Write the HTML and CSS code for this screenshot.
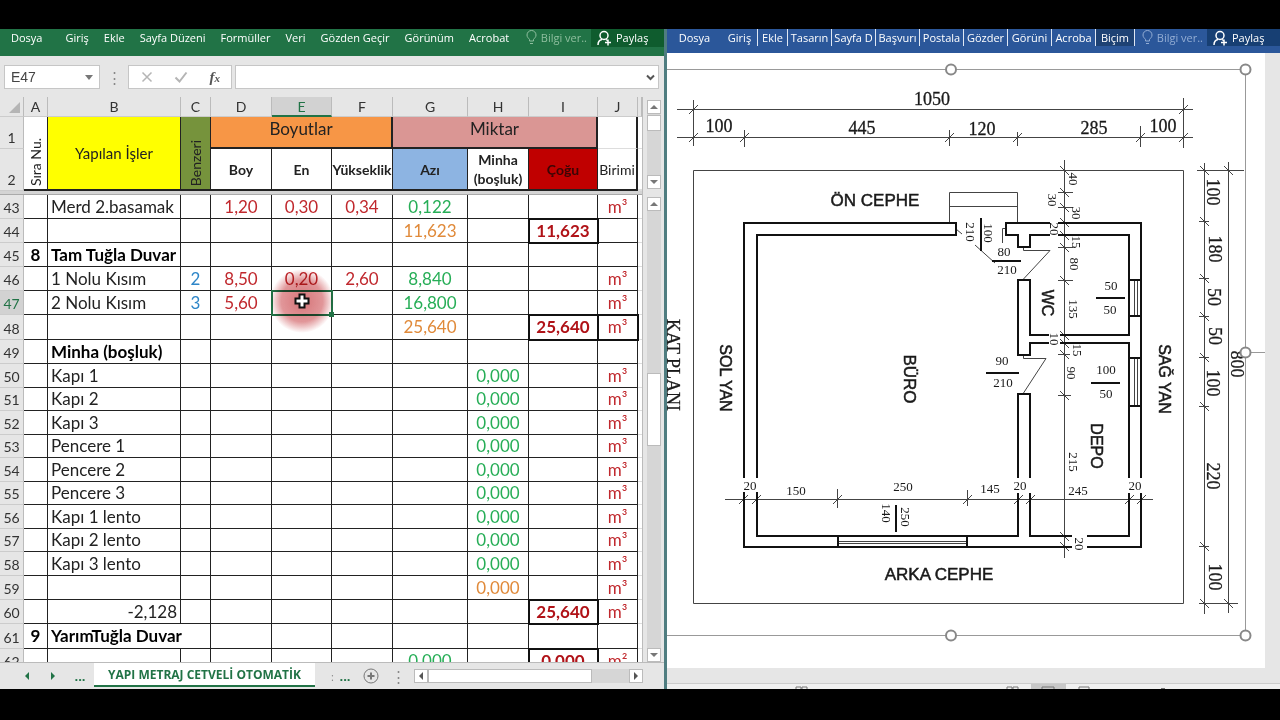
FILE: index.html
```html
<!DOCTYPE html>
<html lang="tr">
<head>
<meta charset="utf-8">
<title>Yapı Metraj Cetveli</title>
<link rel="stylesheet" href="styles.css">
</head>
<body>
<main class="desktop">
<section class="excel">
  <nav class="ribbon excel-ribbon">
    <button class="file">Dosya</button><button>Giriş</button><button>Ekle</button><button>Sayfa Düzeni</button><button>Formüller</button><button>Veri</button><button>Gözden Geçir</button><button>Görünüm</button><button>Acrobat</button>
    <button class="tell"><svg width="11" height="16" viewBox="0 0 11 16"><path d="M3.500 11V9.500C2.500 8 1 7.300 1 5a4.500 4.500 0 0 1 9 0c0 2.300-1.500 3-2.500 4.500V11zM4 13.500h3"/></svg>Bilgi ver..</button>
    <button class="share"><svg width="15" height="16" viewBox="0 0 15 16"><circle cx="7" cy="5.500" r="4"/><path d="M1 15c0-3 1.500-5 4-5.500M9 9.500l1.500 1M11 9.500v6M8 12.500h6"/></svg>Paylaş</button>
  </nav>
  <div class="formula-bar">
    <button class="name-box"><span>E47</span><i class="caret"></i></button>
    <span class="grip">⋮</span>
    <div class="fx">
      <button aria-label="İptal"><svg width="12" height="12" viewBox="0 0 12 12"><path d="M1.500 1.500l9 9M10.500 1.500l-9 9"/></svg></button>
      <button aria-label="Gir"><svg width="14" height="12" viewBox="0 0 14 12"><path class="check" d="M1.500 6.500l4 4L12.500 1.500"/></svg></button>
      <button class="fn" aria-label="İşlev ekle">f<small>x</small></button>
    </div>
    <label class="formula"><input type="text" aria-label="Formül"><svg width="9" height="7" viewBox="0 0 9 7"><path d="M1 1.500l3.500 3.500L8 1.500"/></svg></label>
  </div>
  <div class="sheet-area">
    <div class="sheet">
      <table>
        <colgroup><col class="w-head"><col class="w-a"><col class="w-b"><col class="w-c"><col class="w-d"><col class="w-e"><col class="w-f"><col class="w-g"><col class="w-h"><col class="w-i"><col class="w-j"><col></colgroup>
        <thead>
          <tr class="letters"><th class="corner"><i></i></th><th>A</th><th>B</th><th>C</th><th>D</th><th class="current">E</th><th>F</th><th>G</th><th>H</th><th>I</th><th>J</th><th></th></tr>
          <tr class="row-one"><th class="num">1</th><td rowspan="2" class="side thick-b"><span>Sıra Nu.</span></td><td rowspan="2" class="yellow thick-b">Yapılan İşler</td><td rowspan="2" class="side olive thick-b"><span>Benzeri</span></td><td colspan="3" class="group orange thick-b thick-r">Boyutlar</td><td colspan="3" class="group pink thick-b thick-r">Miktar</td><td class="faint thick-r"></td><td></td></tr>
          <tr class="row-two"><th class="num">2</th><td>Boy</td><td>En</td><td>Yükseklik</td><td class="blue">Azı</td><td>Minha (boşluk)</td><td class="red">Çoğu</td><td class="unit thick-r">Birimi</td><td></td></tr>
          <tr class="split"><th colspan="12"></th></tr>
        </thead>
        <tbody>
          <tr><th>43</th><td></td><td>Merd 2.basamak</td><td></td><td>1,20</td><td>0,30</td><td>0,34</td><td>0,122</td><td></td><td></td><td>m³</td><td></td></tr>
          <tr><th>44</th><td></td><td></td><td></td><td></td><td></td><td></td><td class="sum">11,623</td><td></td><td class="box">11,623</td><td></td><td></td></tr>
          <tr class="title"><th>45</th><td>8</td><td>Tam Tuğla Duvar</td><td></td><td></td><td></td><td></td><td></td><td></td><td></td><td></td><td></td></tr>
          <tr><th>46</th><td></td><td>1 Nolu Kısım</td><td>2</td><td>8,50</td><td>0,20</td><td>2,60</td><td>8,840</td><td></td><td></td><td>m³</td><td></td></tr>
          <tr><th class="current">47</th><td></td><td>2 Nolu Kısım</td><td>3</td><td>5,60</td><td class="active"><i class="spot"></i><svg class="cursor" width="16" height="16" viewBox="0 0 16 16"><path d="M5.500 1.500h5v4h4v5h-4v4h-5v-4h-4v-5h4z"/></svg></td><td></td><td>16,800</td><td></td><td></td><td>m³</td><td></td></tr>
          <tr class="tall"><th>48</th><td></td><td></td><td></td><td></td><td></td><td></td><td class="sum">25,640</td><td></td><td class="box">25,640</td><td class="box-unit">m³</td><td></td></tr>
          <tr class="title"><th>49</th><td></td><td>Minha (boşluk)</td><td></td><td></td><td></td><td></td><td></td><td></td><td></td><td></td><td></td></tr>
          <tr><th>50</th><td></td><td>Kapı 1</td><td></td><td></td><td></td><td></td><td></td><td>0,000</td><td></td><td>m³</td><td></td></tr>
          <tr class="short"><th>51</th><td></td><td>Kapı 2</td><td></td><td></td><td></td><td></td><td></td><td>0,000</td><td></td><td>m³</td><td></td></tr>
          <tr><th>52</th><td></td><td>Kapı 3</td><td></td><td></td><td></td><td></td><td></td><td>0,000</td><td></td><td>m³</td><td></td></tr>
          <tr class="short"><th>53</th><td></td><td>Pencere 1</td><td></td><td></td><td></td><td></td><td></td><td>0,000</td><td></td><td>m³</td><td></td></tr>
          <tr><th>54</th><td></td><td>Pencere 2</td><td></td><td></td><td></td><td></td><td></td><td>0,000</td><td></td><td>m³</td><td></td></tr>
          <tr class="short"><th>55</th><td></td><td>Pencere 3</td><td></td><td></td><td></td><td></td><td></td><td>0,000</td><td></td><td>m³</td><td></td></tr>
          <tr><th>56</th><td></td><td>Kapı 1 lento</td><td></td><td></td><td></td><td></td><td></td><td>0,000</td><td></td><td>m³</td><td></td></tr>
          <tr class="short"><th>57</th><td></td><td>Kapı 2 lento</td><td></td><td></td><td></td><td></td><td></td><td>0,000</td><td></td><td>m³</td><td></td></tr>
          <tr><th>58</th><td></td><td>Kapı 3 lento</td><td></td><td></td><td></td><td></td><td></td><td>0,000</td><td></td><td>m³</td><td></td></tr>
          <tr><th>59</th><td></td><td></td><td></td><td></td><td></td><td></td><td></td><td class="sum">0,000</td><td></td><td>m³</td><td></td></tr>
          <tr><th>60</th><td></td><td class="right">-2,128</td><td></td><td></td><td></td><td></td><td></td><td></td><td class="box">25,640</td><td>m³</td><td></td></tr>
          <tr class="title tall"><th>61</th><td>9</td><td class="spill">YarımTuğla Duvar</td><td></td><td></td><td></td><td></td><td></td><td></td><td></td><td></td><td></td></tr>
          <tr><th>62</th><td></td><td></td><td></td><td></td><td></td><td></td><td>0,000</td><td></td><td class="box">0,000</td><td>m²</td><td></td></tr>
        </tbody>
      </table>
    </div>
    <div class="scrolls">
      <div class="vscroll frozen"><button class="up" aria-label="Yukarı"></button><i class="thumb"></i><button class="down" aria-label="Aşağı"></button></div>
      <div class="vscroll main"><button class="up" aria-label="Yukarı"></button><i class="thumb"></i><button class="down" aria-label="Aşağı"></button></div>
    </div>
  </div>
  <footer class="tabs">
    <button class="step prev" aria-label="Önceki"></button><button class="step next" aria-label="Sonraki"></button><button class="more">...</button>
    <button class="tab">YAPI METRAJ CETVELİ OTOMATİK</button>
    <span class="sep">:</span><button class="more">...</button>
    <button class="add" aria-label="Yeni sayfa"><svg width="16" height="16" viewBox="0 0 16 16"><circle cx="8" cy="8" r="7"/><path d="M8 4.500v7M4.500 8h7"/></svg></button>
    <span class="grip">⋮</span>
    <div class="hscroll"><button class="left" aria-label="Sola"></button><i class="thumb"></i><button class="rightward" aria-label="Sağa"></button></div>
  </footer>
</section>
<section class="word">
  <nav class="ribbon word-ribbon">
    <button class="file">Dosya</button><button class="home">Giriş</button><button class="narrow">Ekle</button><button>Tasarın</button><button>Sayfa D</button><button>Başvurı</button><button>Postala</button><button>Gözder</button><button>Görüni</button><button>Acroba</button><button class="format">Biçim</button>
    <button class="tell"><svg width="11" height="16" viewBox="0 0 11 16"><path d="M3.500 11V9.500C2.500 8 1 7.300 1 5a4.500 4.500 0 0 1 9 0c0 2.300-1.500 3-2.500 4.500V11zM4 13.500h3"/></svg>Bilgi ver..</button>
    <button class="share"><svg width="15" height="16" viewBox="0 0 15 16"><circle cx="7" cy="5.500" r="4"/><path d="M1 15c0-3 1.500-5 4-5.500M9 9.500l1.500 1M11 9.500v6M8 12.500h6"/></svg>Paylaş</button>
  </nav>
  <div class="document">
    <svg class="plan" viewBox="667 53 598 615" role="img" aria-label="Kat planı">
      <g class="thin">
        <path d="M677 109.500H1193M677 137.500H1193M693.500 100V146M1183.500 98V148M744.500 130V147M949.500 130V146M1017.500 132V146M1140.500 126V147"/>
        <path d="M689 114l9-9M1179 114l9-9M689 142l9-9M740 142l9-9M945 142l9-9M1013 142l9-9M1136 142l9-9M1179 142l9-9"/>
        <path d="M693.500 170.500H1183.500V603.500H693.500z"/>
        <path d="M1204.500 163V614M1228.500 162V613M1197 170.500H1244M1199 603.500H1238"/>
        <path d="M1200 166l9 9M1224 166l9 9M1200 217l9 9M1200 274l9 9M1200 312l9 9M1200 353l9 9M1200 402l9 9M1200 542l9 9M1200 599l9 9M1224 599l9 9"/>
        <path d="M1199 221.500h10M1199 278.500h10M1199 316.500h10M1199 357.500h10M1199 406.500h10M1199 546.500h10"/>
        <path d="M949.500 222V192.500H1017.500V222M949.500 206.500H1017.500"/>
        <path d="M1023.500 247V250.500H1050L1023.500 279M1023.500 354V358.500H1046L1023.500 393M956 229l6 5M975 245L995 263M1005 228.500H1002.500V243"/>
        <path d="M1064.500 160V558M1058 192.500h15M1058 207.500h15M1058 247.500h15M1058 280.500h15M1058 354.500h12M1058 395.500h13"/>
        <path d="M1060 166l9 9M1060 188l9 9M1060 203l9 9M1060 218l9 9M1060 231l9 9M1060 243l9 9M1060 276l9 9M1060 331l9 9M1060 339l9 9M1060 350l9 9M1060 391l9 9M1060 532l9 9M1060 542l9 9"/>
        <path d="M725 499.500H1153M837.500 489V508M967.500 490V506"/>
        <path d="M739 504l9-9M752 504l9-9M833 504l9-9M963 504l9-9M1014 504l9-9M1026 504l9-9M1125 504l9-9M1137 504l9-9"/>
        <path d="M1134.500 280V316M1137.500 280V316M1134.500 358V406M1137.500 358V406M838 541.500H967M838 543.500H967"/>
      </g>
      <g class="wall">
        <path d="M744 478V223H956V235H757V478M744 492V547H1072M757 492V536H1018V493M1087 547H1141V493M1072 536H1030V493M1087 536H1129V493"/>
        <path d="M1050 223H1006V235H1018V247H1030V235H1050M1058 223H1141V478M1058 235H1129V335H1060M1049 335H1030V280H1018V355H1030V343H1049M1060 343H1129V478M1018 478V394H1030V478"/>
        <path d="M1129 280h12M1129 316h12M1129 358h12M1129 406h12M838 536v11M967 536v11"/>
        <path d="M992 261h29M1096 298h29M986 373h33M1091 383h29M981 218v33M896 505v27"/>
      </g>
      <g class="serif large">
        <text x="932" y="105">1050</text><text x="719" y="132">100</text><text x="862" y="134">445</text><text x="982" y="135">120</text><text x="1094" y="134">285</text><text x="1163" y="132">100</text>
        <text transform="translate(1207 192) rotate(90)">100</text><text transform="translate(1209 249) rotate(90)">180</text><text transform="translate(1208 297) rotate(90)">50</text><text transform="translate(1209 336) rotate(90)">50</text><text transform="translate(1207 383) rotate(90)">100</text><text transform="translate(1207 476) rotate(90)">220</text><text transform="translate(1209 577) rotate(90)">100</text><text transform="translate(1231 364) rotate(90)">800</text><text transform="translate(667 365) rotate(90)">KAT PLANI</text>
      </g>
      <g class="serif small">
        <text x="1004" y="256">80</text><text x="1007" y="274">210</text><text x="1111" y="290">50</text><text x="1110" y="314">50</text><text x="1002" y="365">90</text><text x="1003" y="387">210</text><text x="1106" y="374">100</text><text x="1106" y="398">50</text>
        <text x="750" y="490">20</text><text x="796" y="495">150</text><text x="903" y="491">250</text><text x="990" y="493">145</text><text x="1020" y="490">20</text><text x="1078" y="495">245</text><text x="1135" y="490">20</text>
        <text transform="translate(1069 179) rotate(90)">40</text><text transform="translate(1048 200) rotate(90)">30</text><text transform="translate(1072 213) rotate(90)">30</text><text transform="translate(1050 229) rotate(90)">20</text><text transform="translate(1072 242) rotate(90)">15</text><text transform="translate(1070 264) rotate(90)">80</text><text transform="translate(1069 309) rotate(90)">135</text><text transform="translate(1050 339) rotate(90)">10</text><text transform="translate(1073 350) rotate(90)">15</text><text transform="translate(1067 373) rotate(90)">90</text><text transform="translate(1069 462) rotate(90)">215</text><text transform="translate(1075 544) rotate(90)">20</text>
        <text transform="translate(966 232) rotate(90)">210</text><text transform="translate(984 233) rotate(90)">100</text><text transform="translate(882 513) rotate(90)">140</text><text transform="translate(901 517) rotate(90)">250</text>
      </g>
      <g class="sans">
        <text class="wide" x="875" y="206">ÖN CEPHE</text><text class="wide" x="939" y="580">ARKA CEPHE</text>
        <text transform="translate(720 378) rotate(90)">SOL YAN</text><text class="wide" transform="translate(904 379) rotate(90)">BÜRO</text><text transform="translate(1042 303) rotate(90)">WC</text><text transform="translate(1091 446) rotate(90)">DEPO</text><text transform="translate(1159 379) rotate(90)">SAĞ YAN</text>
      </g>
      <g class="frame">
        <path d="M667 69.500H1245.500V635.500H667M1245 352.500H1265"/>
        <circle cx="951" cy="69.500" r="5"/><circle cx="1245.500" cy="69.500" r="5"/><circle cx="1245.500" cy="352.500" r="5"/><circle cx="1245.500" cy="635.500" r="5"/><circle cx="951" cy="635.500" r="5"/>
      </g>
    </svg>
  </div>
  <footer class="status">
    <svg viewBox="667 683 613 6" preserveAspectRatio="xMinYMin slice"><path class="picked" d="M1031 683h35v6h-35z"/><path d="M796 688v-2h5v2M802 688v-2h5v2M1007 688v-2h5v2M1013 688v-2h5v2M1042 688v-2h12v2M1079 688v-2h10v2M1161 687.500h4"/></svg>
  </footer>
</section>
</main>
</body>
</html>
```
FILE: styles.css
```css
* { box-sizing: border-box; }
body { margin: 0; background: #000; font-family: "Open Sans", "Noto Sans", sans-serif; font-size: 11px; color: #222; }
button { font: inherit; color: inherit; background: none; border: 0; padding: 0; margin: 0; white-space: nowrap; }
svg { fill: none; stroke: currentColor; flex: none; }
.desktop { display: flex; height: 100vh; padding: 29px 0 31px; }
.excel { flex: 664 1 0; min-width: 0; display: flex; flex-direction: column; background: #e6e6e6; border-right: 3px solid #4f7d80; }
.word { flex: 613 1 0; min-width: 0; display: flex; flex-direction: column; background: #e6e6e6; overflow: hidden; }

/* Ribbons */
.ribbon { display: flex; align-items: flex-start; color: #fff; overflow: hidden; flex: none; }
.ribbon button { height: 18px; line-height: 18px; }
.ribbon .tell, .ribbon .share { display: flex; align-items: center; gap: 4px; }
.ribbon .share svg { stroke-width: 1.5; }
.excel-ribbon { height: 27px; background: #217346; gap: 15px; padding-left: 11px; }
.excel-ribbon .file { margin-right: 8px; }
.excel-ribbon .tell { color: #8fbf9f; margin-left: auto; margin-right: -11px; }
.excel-ribbon .share { background: #0f5c2e; width: 73px; padding-left: 6px; flex: none; }
.word-ribbon { height: 24px; background: #2b579a; }
.word-ribbon button { width: 44px; height: 17px; line-height: 15px; border-right: 1px solid #dfe7f3; overflow: hidden; flex: none; }
.word-ribbon .file { width: 55px; border: 0; }
.word-ribbon .home { width: 36px; }
.word-ribbon .narrow { width: 30px; }
.word-ribbon .format { width: 39px; background: #1e4274; }
.word-ribbon .tell { width: auto; border: 0; color: #93add4; margin-left: auto; margin-right: 4px; }
.word-ribbon .share { width: 73px; border: 0; background: #173f73; padding-left: 6px; }

/* Formula bar */
.formula-bar { display: flex; height: 41px; padding: 9px 5px 8px 4px; flex: none; }
.formula-bar > * { height: 24px; }
.name-box, .fx, .formula { background: #fff; border: 1px solid #c6c6c6; display: flex; align-items: center; }
.name-box { width: 96px; justify-content: space-between; padding: 0 6px; font-family: "Liberation Sans", sans-serif; font-size: 14px; color: #444; }
.caret { border: 4px solid transparent; border-top: 5px solid #777; border-bottom: 0; }
.grip { width: 28px; text-align: center; color: #888; font-size: 15px; line-height: 24px; }
.fx { width: 104px; justify-content: space-between; padding: 0 11px 0 12px; color: #b5b5b5; margin-right: 3px; }
.fx svg { stroke-width: 1.5; display: block; }
.fx .check { stroke-width: 2; }
.fn { font: italic bold 15px "Liberation Serif", serif; color: #555; }
.fn small { font-size: 11px; }
.formula { flex: 1; padding-right: 3px; color: #555; }
.formula input { flex: 1; min-width: 0; border: 0; outline: 0; background: none; height: 20px; }
.formula svg { stroke-width: 2; }

/* Sheet */
.sheet-area { flex: 1; min-height: 0; display: flex; overflow: hidden; }
.sheet { flex: 1; min-width: 0; overflow: hidden; border-right: 1px solid #bbb; }
table { width: 100%; table-layout: fixed; border-collapse: separate; border-spacing: 0; font-family: Lato, sans-serif; font-size: 17px; line-height: 20px; background: #fff; }
.w-head, .w-a { width: 24px; }
.w-b { width: 133px; }
.w-c { width: 30px; }
.w-d, .w-f, .w-h { width: 61px; }
.w-e { width: 60px; }
.w-g { width: 75px; }
.w-i { width: 69px; }
.w-j { width: 40px; }
th, td { padding: 0; height: 24px; text-align: center; white-space: nowrap; }
th { background: #e6e6e6; font-weight: 400; font-size: 14px; color: #333; border-right: 1px solid #bbb; border-bottom: 1px solid #ccc; vertical-align: bottom; line-height: 20px; }
th.current { background: #d2d2d2; color: #217346; }
td { border-right: 1px solid #222; border-bottom: 1px solid #222; }
tr > td:last-child { border-right: 0; border-bottom-color: #ddd; }
.letters th { height: 20px; line-height: 18px; }
.letters th.current { border-bottom: 2px solid #217346; line-height: 17px; }
.corner i { display: block; margin: 0 3px 3px auto; width: 0; border-left: 11px solid transparent; border-bottom: 11px solid #b5b5b5; }
.row-one th, .row-one td { height: 32px; }
.row-two th, .row-two td { height: 42px; }
.row-one .side, .row-one .yellow { height: 74px; font-size: 15px; }
.row-one .side { font-size: 14px; }
.side span { writing-mode: vertical-rl; transform: rotate(180deg); line-height: 18px; vertical-align: bottom; }
.side { vertical-align: bottom; padding-bottom: 3px; }
.row-two td { font-size: 14px; font-weight: 700; line-height: 19px; white-space: normal; border-bottom: 2px solid #222; }
.row-two .unit { font-weight: 400; }
.row-one .group { font-size: 17px; line-height: 20px; vertical-align: top; padding-top: 2px; }
thead .thick-b { border-bottom: 2px solid #222; }
thead .thick-r { border-right: 2px solid #222; }
.faint { border-bottom-color: #ddd; }
.yellow { background: #ff0; }
.olive { background: #76933c; }
.orange { background: #f79646; }
.pink { background: #da9694; }
.blue { background: #8db4e2; }
.red { background: #c00000; color: #3a0505; }
.split th { height: 4px; background: #d4d4d4; border: 0; border-bottom: 1px solid #aaa; line-height: 0; }
.short > * { height: 23px; }
.tall > * { height: 25px; }
tbody td:nth-child(3) { text-align: left; padding-left: 3px; }
tbody td.right { text-align: right; padding-right: 3px; }
tbody td:nth-child(4) { color: #2e86c8; }
tbody td:nth-child(5), tbody td:nth-child(6), tbody td:nth-child(7), tbody td:nth-child(11) { color: #c0282d; }
tbody td:nth-child(8), tbody td:nth-child(9) { color: #27ae57; }
tbody td.sum { color: #e08a3a; }
tbody td.box { color: #b01217; font-weight: 700; }
.box, .box-unit { outline: 2px solid #111; outline-offset: -1px; }
.title td { font-weight: 700; color: #000; }
.title td:nth-child(3) { font-size: 17px; }
.spill { overflow: visible; border-right: 0; }
.active { position: relative; outline: 2px solid #217346; outline-offset: -1px; }
.active::after { content: ""; position: absolute; right: -3px; bottom: -3px; width: 5px; height: 5px; background: #217346; }
.spot { position: absolute; left: 50%; top: 50%; width: 64px; height: 64px; margin: -34px 0 0 -32px; border-radius: 50%; background: radial-gradient(closest-side, rgba(200, 70, 75, .75) 0, rgba(205, 80, 85, .6) 65%, rgba(215, 110, 110, 0) 100%); mix-blend-mode: multiply; }
.cursor { position: absolute; left: 50%; top: 50%; margin: -10px 0 0 -8px; fill: #fff; stroke: #111; stroke-width: 2; }

/* Scroll bars */
.scrolls { width: 21px; display: flex; flex-direction: column; gap: 8px; padding: 3px 0 0 4px; background: #e6e6e6; flex: none; }
.vscroll { width: 14px; display: flex; flex-direction: column; background: #d6d6d6; }
.vscroll.frozen { height: 89px; }
.vscroll.main { flex: 1; }
.vscroll button, .hscroll button { background: #fff; border: 1px solid #bbb; width: 14px; height: 14px; display: grid; place-items: center; flex: none; }
.vscroll .thumb, .hscroll .thumb { background: #fff; border: 1px solid #bbb; }
.vscroll .down { margin-top: auto; }
.frozen .thumb { height: 16px; margin-top: 1px; }
.main .thumb { height: 73px; margin-top: 162px; }
.up::after, .down::after, .left::after, .rightward::after, .step::after { content: ""; display: block; border: 4px solid transparent; }
.up::after { border-bottom-color: #777; border-top: 0; }
.down::after { border-top-color: #777; border-bottom: 0; }
.left::after { border-right-color: #555; border-left: 0; }
.rightward::after { border-left-color: #555; border-right: 0; }

/* Sheet tabs */
.tabs { height: 27px; flex: none; display: flex; align-items: center; border-top: 1px solid #bbb; padding-right: 21px; color: #217346; }
.step { width: 26px; display: grid; place-items: center; }
.prev { margin-left: 14px; }
.prev::after { border-right-color: #217346; border-left: 0; }
.next::after { border-left-color: #217346; border-right: 0; }
.more { width: 28px; font-weight: 700; font-size: 13px; }
.tab { background: #fff; width: 221px; height: 24px; align-self: flex-start; border-bottom: 2px solid #217346; font-weight: 700; font-size: 12px; }
.sep { width: 30px; text-align: center; color: #888; margin-right: -14px; padding-left: 5px; }
.add { width: 24px; display: grid; place-items: center; color: #777; }
.add svg { stroke-width: 1; }
.add path { stroke-width: 2; }
.tabs .grip { width: 31px; }
.hscroll { flex: 1; display: flex; background: #d6d6d6; }
.hscroll .thumb { flex: 0 0 164px; }
.hscroll .rightward { margin-left: auto; }

/* Document */
.document { flex: 1; min-height: 0; padding-right: 15px; overflow: hidden; }
.plan { display: block; width: 100%; height: auto; background: #fff; }
.thin { stroke: #444; stroke-width: 1; }
.wall { stroke: #111; stroke-width: 2; }
.plan text { stroke: none; fill: #1a1a1a; text-anchor: middle; }
.serif { font-family: "Liberation Serif", serif; }
.large { font-size: 18px; }
.plan .large text { stroke: #1a1a1a; stroke-width: .3; }
.small { font-size: 13px; }
.sans { font-family: "Liberation Sans", sans-serif; font-size: 16px; }
.plan .sans text { stroke: #1a1a1a; stroke-width: .5; }
.wide { font-size: 17px; }
.frame { stroke: #999; }
.frame circle { fill: #fff; stroke: #888; stroke-width: 2; }
.status { height: 6px; flex: none; background: #f0f0f0; border-top: 1px solid #ccc; color: #777; }
.status svg { display: block; width: 100%; height: 6px; }
.status .picked { fill: #c8c8c8; stroke: none; }
```
